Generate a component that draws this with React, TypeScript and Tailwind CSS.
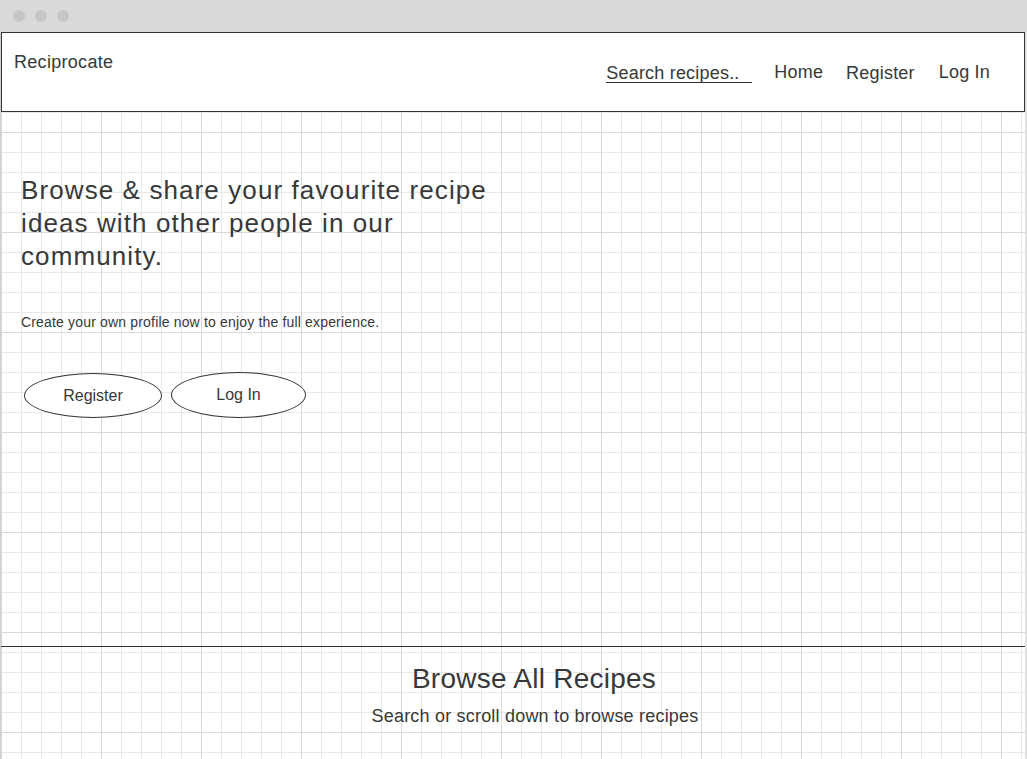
import React from "react";

const gridBg =
  "bg-[linear-gradient(#d9d9d9_1px,transparent_1px),linear-gradient(90deg,#d9d9d9_1px,transparent_1px),linear-gradient(#e8e8e8_1px,transparent_1px),linear-gradient(90deg,#e8e8e8_1px,transparent_1px)] bg-[size:100px_100px,100px_100px,20px_20px,20px_20px]";

export default function App() {
  return (
    <div
      className="w-[1027px] h-[759px] overflow-hidden bg-white text-[#383838] flex flex-col"
      style={{ fontFamily: '"Liberation Sans", Arial, sans-serif' }}
    >
      {/* window chrome */}
      <div className="h-[32px] shrink-0 bg-[#d9d9d9] flex items-center gap-[10px] pl-[13px]">
        <span className="w-[12px] h-[12px] rounded-full bg-[#c6c6c6]" />
        <span className="w-[12px] h-[12px] rounded-full bg-[#c6c6c6]" />
        <span className="w-[12px] h-[12px] rounded-full bg-[#c6c6c6]" />
      </div>

      <div className="flex flex-1 min-h-0">
        <div className="w-[1px] bg-[#d0d0d0]" />
        <div className={`w-[1024px] flex flex-col ${gridBg}`}>
          {/* header */}
          <header className="h-[80px] shrink-0 border border-[#333333] bg-white flex items-start justify-between">
            <div className="pl-[12px] pt-[19px] text-[18px] leading-[21px] tracking-[0.3px]">Reciprocate</div>
            <nav className="flex items-start text-[18px] leading-[21px] tracking-[0.2px] pr-[34px]">
              <div className="mt-[31px] w-[146px] border-b border-[#333333] leading-[18px]">Search recipes..</div>
              <a className="mt-[29px] ml-[22px]">Home</a>
              <a className="mt-[30px] ml-[23px]">Register</a>
              <a className="mt-[29px] ml-[24px]">Log In</a>
            </nav>
          </header>

          {/* hero */}
          <section className="h-[534px] shrink-0 pl-[20px] pt-[62px]">
            <h1 className="w-[510px] text-[26px] leading-[33px] tracking-[1.1px]">
              Browse &amp; share your favourite recipe ideas with other people in our community.
            </h1>
            <p className="mt-[41px] text-[14px] leading-[17px] tracking-[0.17px]">
              Create your own profile now to enjoy the full experience.
            </p>
            <div className="mt-[41px] flex items-start">
              <button className="ml-[3px] mt-[1px] w-[138px] h-[45px] rounded-[50%] border border-[#333333] bg-white text-[16px]">
                Register
              </button>
              <button className="ml-[9px] w-[135px] h-[46px] rounded-[50%] border border-[#333333] bg-white text-[16px]">
                Log In
              </button>
            </div>
          </section>

          {/* browse section */}
          <section className="border-t border-[#333333] flex flex-col items-center pt-[16px]">
            <h2 className="text-[28px] leading-[32px] tracking-[0.25px] pl-[42px]">Browse All Recipes</h2>
            <p className="mt-[11px] text-[18px] leading-[21px] tracking-[0.2px] pl-[44px]">
              Search or scroll down to browse recipes
            </p>
          </section>
        </div>
        <div className="w-[2px] bg-[#e2e2e2]" />
      </div>
    </div>
  );
}
